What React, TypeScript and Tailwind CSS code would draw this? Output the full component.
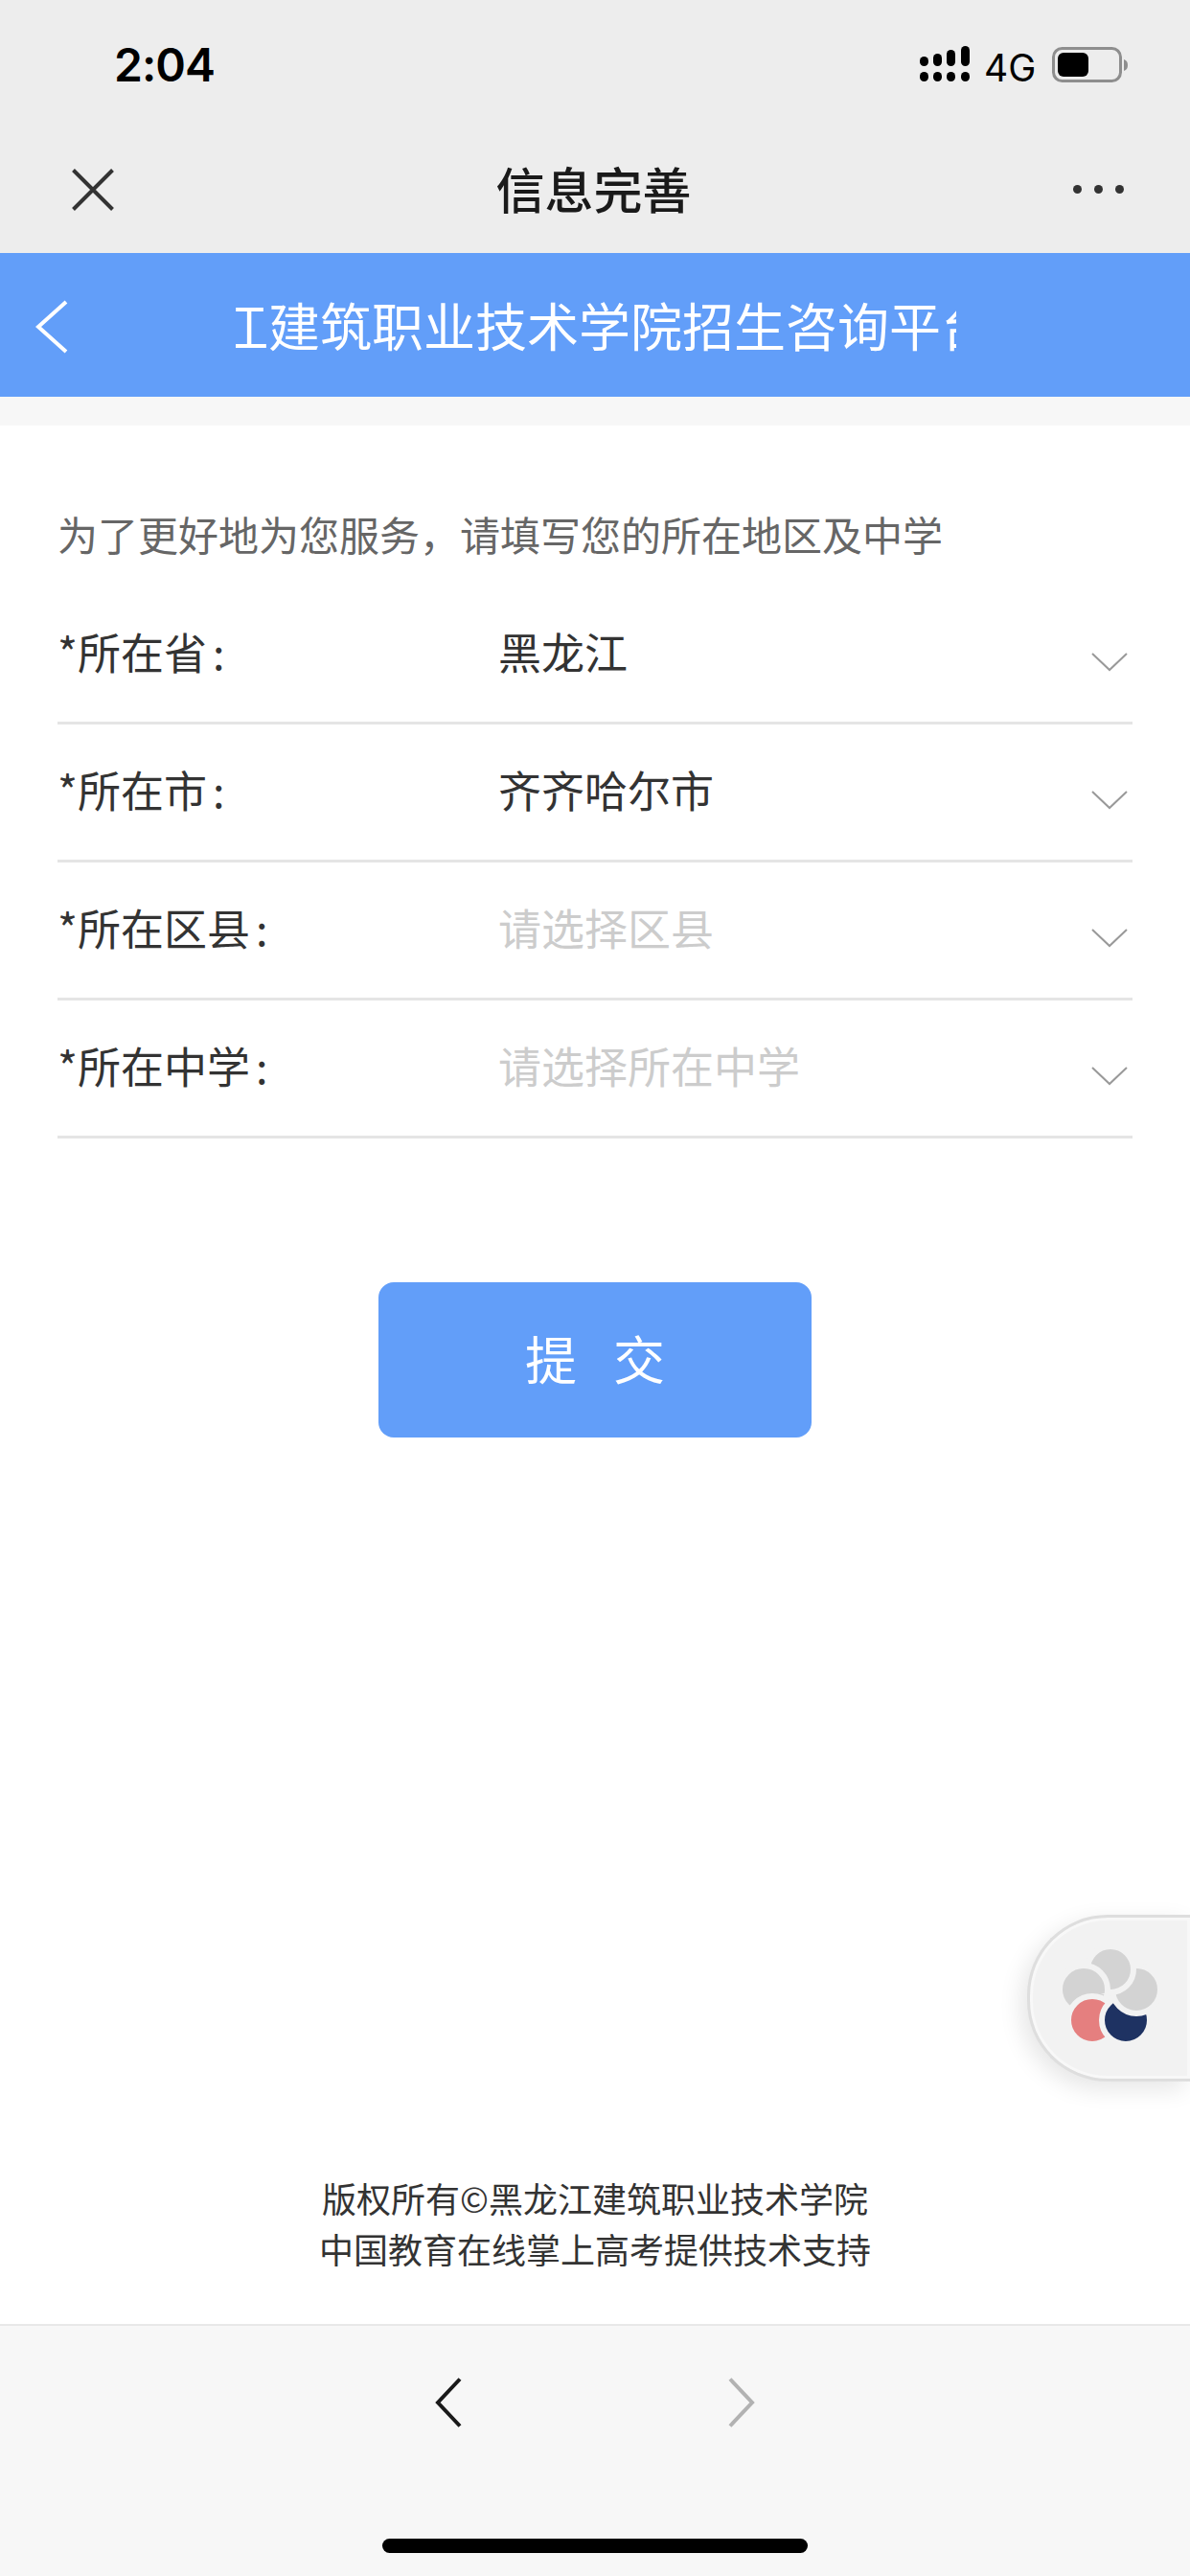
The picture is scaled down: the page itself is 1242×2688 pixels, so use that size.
import React from 'react';

const cjk = "font-['Noto_Sans_CJK_SC','Noto_Sans',sans-serif]";

const rows = [
  { label: '*所在省', value: '黑龙江' },
  { label: '*所在市', value: '齐齐哈尔市' },
  { label: '*所在区县', placeholder: '请选择区县' },
  { label: '*所在中学', placeholder: '请选择所在中学' },
];

function Signal() {
  return (
    <svg width="52" height="37" viewBox="0 0 52 37" fill="#000">
      <rect x="0" y="11" width="9" height="10" rx="4.5" />
      <rect x="14" y="8" width="9" height="13" rx="4.5" />
      <rect x="28" y="4" width="9" height="17" rx="4.5" />
      <rect x="43" y="0" width="9" height="21" rx="4.5" />
      <rect x="0" y="27" width="9" height="10" rx="4.5" />
      <rect x="14" y="27" width="9" height="10" rx="4.5" />
      <rect x="28" y="27" width="9" height="10" rx="4.5" />
      <rect x="43" y="27" width="9" height="10" rx="4.5" />
    </svg>
  );
}

function Battery() {
  return (
    <svg width="80" height="38" viewBox="0 0 80 38">
      <rect x="1.5" y="1.5" width="70" height="34" rx="9" fill="none" stroke="#8e8e8e" strokeWidth="3" />
      <rect x="6" y="6" width="32" height="25" rx="6" fill="#000" />
      <path d="M75 13 C78 14 79 16 79 19 C79 22 78 24 75 25 Z" fill="#8e8e8e" />
    </svg>
  );
}

function Flower() {
  return (
    <svg width="106" height="102" viewBox="0 0 106 102">
      <defs>
        <clipPath id="upper">
          <rect x="0" y="0" width="106" height="49" />
        </clipPath>
      </defs>
      <g stroke="#f2f2f2" strokeWidth="6">
        <circle cx="25" cy="45" r="25" fill="#d3d3d3" />
        <circle cx="34" cy="77" r="25" fill="#e57f7f" />
        <circle cx="69" cy="77" r="25" fill="#1e3262" />
        <circle cx="80" cy="45" r="25" fill="#d3d3d3" />
        <circle cx="53" cy="24" r="24" fill="#d3d3d3" />
        <circle cx="25" cy="45" r="25" fill="#d3d3d3" clipPath="url(#upper)" />
      </g>
    </svg>
  );
}

export default function App() {
  return (
    <div className={`relative flex h-[2688px] w-[1242px] flex-col overflow-hidden bg-white ${cjk}`}>
      {/* status bar + wechat nav */}
      <div className="h-[264px] shrink-0 bg-[#ededed]">
        <div className="flex h-[134px] items-start pt-[40px] pl-[119px] pr-[64px]">
          <span className="text-[48px] leading-[56px] font-semibold text-black font-['Inter',sans-serif] tracking-[-1px]">2:04</span>
          <div className="ml-auto flex items-start">
            <div className="mt-[8px]"><Signal /></div>
            <span className="ml-[15px] mt-[9px] w-[53px] text-[39px] leading-[44px] font-['Inter',sans-serif] text-black">4G</span>
            <div className="ml-[18px] mt-[9px]"><Battery /></div>
          </div>
        </div>
        <div className="flex h-[130px] items-center justify-between pb-[3px] pl-[75px] pr-[69px]">
          <svg width="44" height="44" viewBox="0 0 44 44" stroke="#333" strokeWidth="4" fill="none">
            <path d="M1.5 1.5 L42.5 42.5 M42.5 1.5 L1.5 42.5" />
          </svg>
          <span className="mb-[4px] text-[51px] leading-[60px] font-medium text-[#1a1a1a]">信息完善</span>
          <div className="flex gap-[13px]">
            <span className="h-[9px] w-[9px] rounded-full bg-[#333]" />
            <span className="h-[9px] w-[9px] rounded-full bg-[#333]" />
            <span className="h-[9px] w-[9px] rounded-full bg-[#333]" />
          </div>
        </div>
      </div>

      {/* blue page header */}
      <div className="flex h-[150px] shrink-0 items-center bg-[#629ef9] pl-[37px]">
        <svg className="mt-[4px]" width="34" height="56" viewBox="0 0 34 56" stroke="#fff" strokeWidth="4" fill="none">
          <path d="M32 2 L3 28 L32 54" />
        </svg>
        <div className="ml-[175px] w-[752px] overflow-hidden">
          <div className="-ml-[128px] whitespace-nowrap text-[54px] leading-[64px] text-white">黑龙江建筑职业技术学院招生咨询平台</div>
        </div>
      </div>
      <div className="h-[30px] shrink-0 bg-[#f7f7f7]" />

      {/* form */}
      <div className="flex flex-1 flex-col px-[60px] pt-[83px]">
        <p className="text-[42px] leading-[60px] text-[#666]">为了更好地为您服务，请填写您的所在地区及中学</p>
        <div className="mt-[25px]">
          {rows.map((r) => (
            <div key={r.label} className="flex h-[144px] items-center border-b-[3px] border-[#e5e5e5]">
              <div className="mb-[6px] w-[460px] shrink-0 text-[45px] leading-[60px] text-[#333]">
                {r.label}<span className="ml-[6px]">:</span>
              </div>
              <div className={`mb-[6px] flex-1 text-[45px] leading-[60px] ${r.value ? 'text-[#333]' : 'text-[#ccc]'}`}>
                {r.value ?? r.placeholder}
              </div>
              <svg className="mr-[5px] mt-[16px] shrink-0" width="38" height="20" viewBox="0 0 38 20" stroke="#999" strokeWidth="2" fill="none">
                <path d="M1 1 L19 18 L37 1" />
              </svg>
            </div>
          ))}
        </div>

        <button className="mx-auto mt-[150px] flex h-[162px] w-[452px] items-center justify-center gap-[38px] rounded-[16px] bg-[#629ef9] pb-[6px] text-[54px] text-white">
          <span>提</span>
          <span>交</span>
        </button>

        <div className="mt-auto pb-[52px] text-center text-[36px] leading-[53px] text-[#333]">
          <div>版权所有©黑龙江建筑职业技术学院</div>
          <div>中国教育在线掌上高考提供技术支持</div>
        </div>
      </div>

      {/* browser toolbar */}
      <div className="relative h-[263px] shrink-0 border-t-[2px] border-[#e8e8e8] bg-[#f7f7f7]">
        <div className="flex justify-center gap-[278px] pt-[54px]">
          <svg width="28" height="52" viewBox="0 0 28 52" stroke="#1a1a1a" strokeWidth="4" fill="none">
            <path d="M26 1.5 L3 26 L26 50.5" />
          </svg>
          <svg width="28" height="52" viewBox="0 0 28 52" stroke="#b2b2b2" strokeWidth="4" fill="none">
            <path d="M2 1.5 L25 26 L2 50.5" />
          </svg>
        </div>
        <div className="absolute bottom-[24px] left-[399px] h-[15px] w-[444px] rounded-full bg-black" />
      </div>

      {/* floating widget */}
      <div className="absolute top-[1998px] right-0 flex h-[174px] w-[170px] items-center rounded-l-[84px] border-y-[3px] border-l-[3px] border-[#dedede] bg-[#f2f2f2] pb-[6px] pl-[31px] shadow-[-6px_8px_24px_rgba(0,0,0,0.10),inset_0_0_0_3px_#f8f8f8]">
        <Flower />
      </div>
    </div>
  );
}
